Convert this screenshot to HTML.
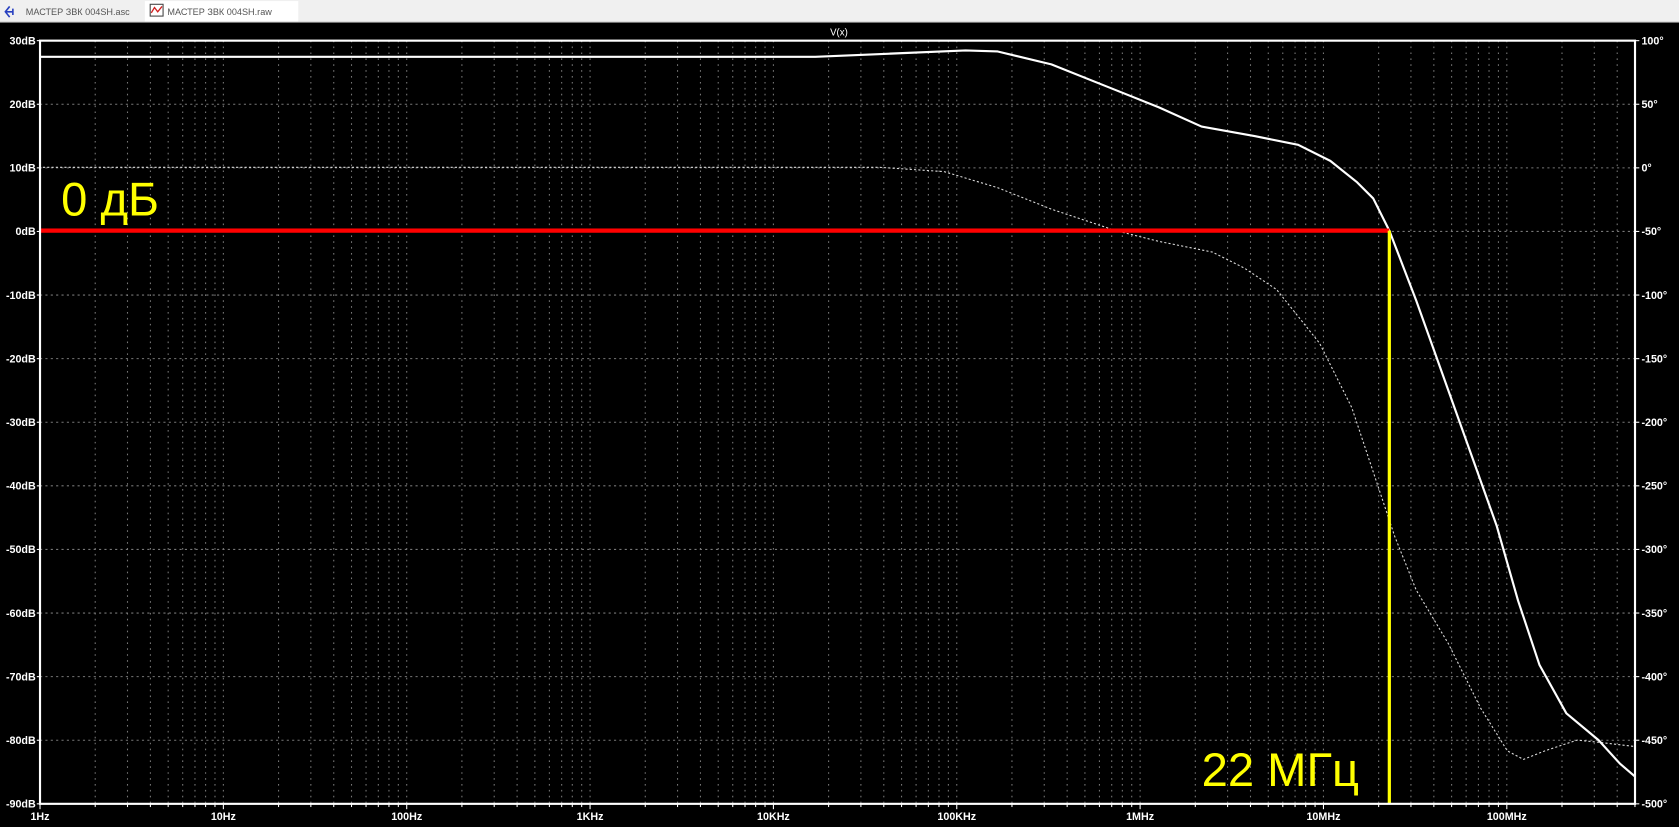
<!DOCTYPE html>
<html><head><meta charset="utf-8"><style>
html,body{margin:0;padding:0;background:#000;width:1679px;height:827px;overflow:hidden}
svg{display:block}
</style></head><body>
<svg id="s" width="1679" height="827" viewBox="0 0 1565 771" preserveAspectRatio="none" xmlns="http://www.w3.org/2000/svg">
<rect x="0" y="0" width="1565" height="771" fill="#000"/>
<rect x="0" y="0" width="1565" height="21" fill="#f0f0f0"/>
<rect x="0" y="20" width="1565" height="1" fill="#ccc"/>
<rect x="135" y="1" width="143" height="19" fill="#fff"/>
<path d="M9 6 L5 11 L9 16 M5 11 H12 M12 8 V14" stroke="#2840c0" stroke-width="1.5" fill="none"/>
<text x="24" y="14" font-family="Liberation Sans,sans-serif" font-size="8.5" fill="#555">МАСТЕР ЗВК 004SH.asc</text>
<rect x="140" y="4" width="12" height="11" fill="#fff" stroke="#444" stroke-width="1"/>
<path d="M141 12 L144 7 L147 11 L151 6" stroke="#d02020" stroke-width="1.2" fill="none"/>
<text x="156" y="14" font-family="Liberation Sans,sans-serif" font-size="8.5" fill="#555">МАСТЕР ЗВК 004SH.raw</text>
<g id="grid"></g>
<text x="782" y="33" font-family="Liberation Sans,sans-serif" font-size="9" fill="#fff" text-anchor="middle">V(x)</text>
<polyline fill="none" stroke="#ddd" stroke-width="1" stroke-dasharray="2,2" points="40,156 820,156 880,160 930,175 980,195 1040,215 1080,225 1130,235 1160,250 1190,270 1230,320 1260,380 1280,440 1300,500 1320,550 1350,600 1380,660 1405,700 1420,708 1440,700 1470,690 1490,692 1524,696"/>
<polyline fill="none" stroke="#fff" stroke-width="2" stroke-linejoin="round" points="38,53 760,53 830,50 900,47 930,48 980,60 1030,80 1080,100 1120,118 1170,127 1210,135 1240,150 1265,170 1280,185 1295,215 1320,280 1345,350 1370,420 1395,490 1415,560 1435,620 1460,665 1490,690 1510,712 1524,724"/>
<rect x="38" y="213" width="1257" height="4" fill="#f00"/>
<rect x="1293.5" y="215" width="3" height="534" fill="#ff0"/>
<text x="57" y="201" font-family="Liberation Sans,sans-serif" font-size="44" fill="#ff0">0 дБ</text>
<text x="1120" y="733" font-family="Liberation Sans,sans-serif" font-size="44" fill="#ff0">22 МГц</text>
<rect x="37.3" y="37.9" width="1486.7" height="711.5" fill="none" stroke="#fff" stroke-width="2"/>
</svg>
<script>
var g=document.getElementById('grid'),h='';
var L=37.3,T=37.9,R=1524,B=749.4,D=170.9,RH=(B-T)/12;
for(var d=0;d<9;d++)for(var k=1;k<10;k++){var x=L+(d+Math.log10(k))*D;if(x>R)break;
 if(!(d==0&&k==1))h+='<line x1="'+x+'" y1="'+T+'" x2="'+x+'" y2="'+B+'" stroke="#777" stroke-width="1" stroke-dasharray="1.5,4"/>';
 h+='<line x1="'+x+'" y1="'+B+'" x2="'+x+'" y2="'+(B+(k==1?5:3))+'" stroke="#fff"/>';}
var f=['1Hz','10Hz','100Hz','1KHz','10KHz','100KHz','1MHz','10MHz','100MHz'];
for(var i=0;i<9;i++)h+='<text x="'+(L+i*D)+'" y="'+(B+15)+'" font-family="Liberation Sans,sans-serif" font-size="10" font-weight="bold" fill="#fff" text-anchor="middle">'+f[i]+'</text>';
for(var j=0;j<=12;j++){var y=T+j*RH;
 if(j>0&&j<12)h+='<line x1="'+L+'" y1="'+y+'" x2="'+R+'" y2="'+y+'" stroke="#777" stroke-dasharray="2,3"/>';
 h+='<line x1="'+(L-3)+'" y1="'+y+'" x2="'+L+'" y2="'+y+'" stroke="#fff"/><line x1="'+R+'" y1="'+y+'" x2="'+(R+4)+'" y2="'+y+'" stroke="#fff"/>';
 h+='<text x="'+(L-4)+'" y="'+(y+3.5)+'" font-family="Liberation Sans,sans-serif" font-size="10" font-weight="bold" fill="#fff" text-anchor="end">'+(30-10*j)+'dB</text>';
 h+='<text x="'+(R+6)+'" y="'+(y+3.5)+'" font-family="Liberation Sans,sans-serif" font-size="10" font-weight="bold" fill="#fff">'+(100-50*j)+'°</text>';}
g.innerHTML=h;
</script>
</body></html>
